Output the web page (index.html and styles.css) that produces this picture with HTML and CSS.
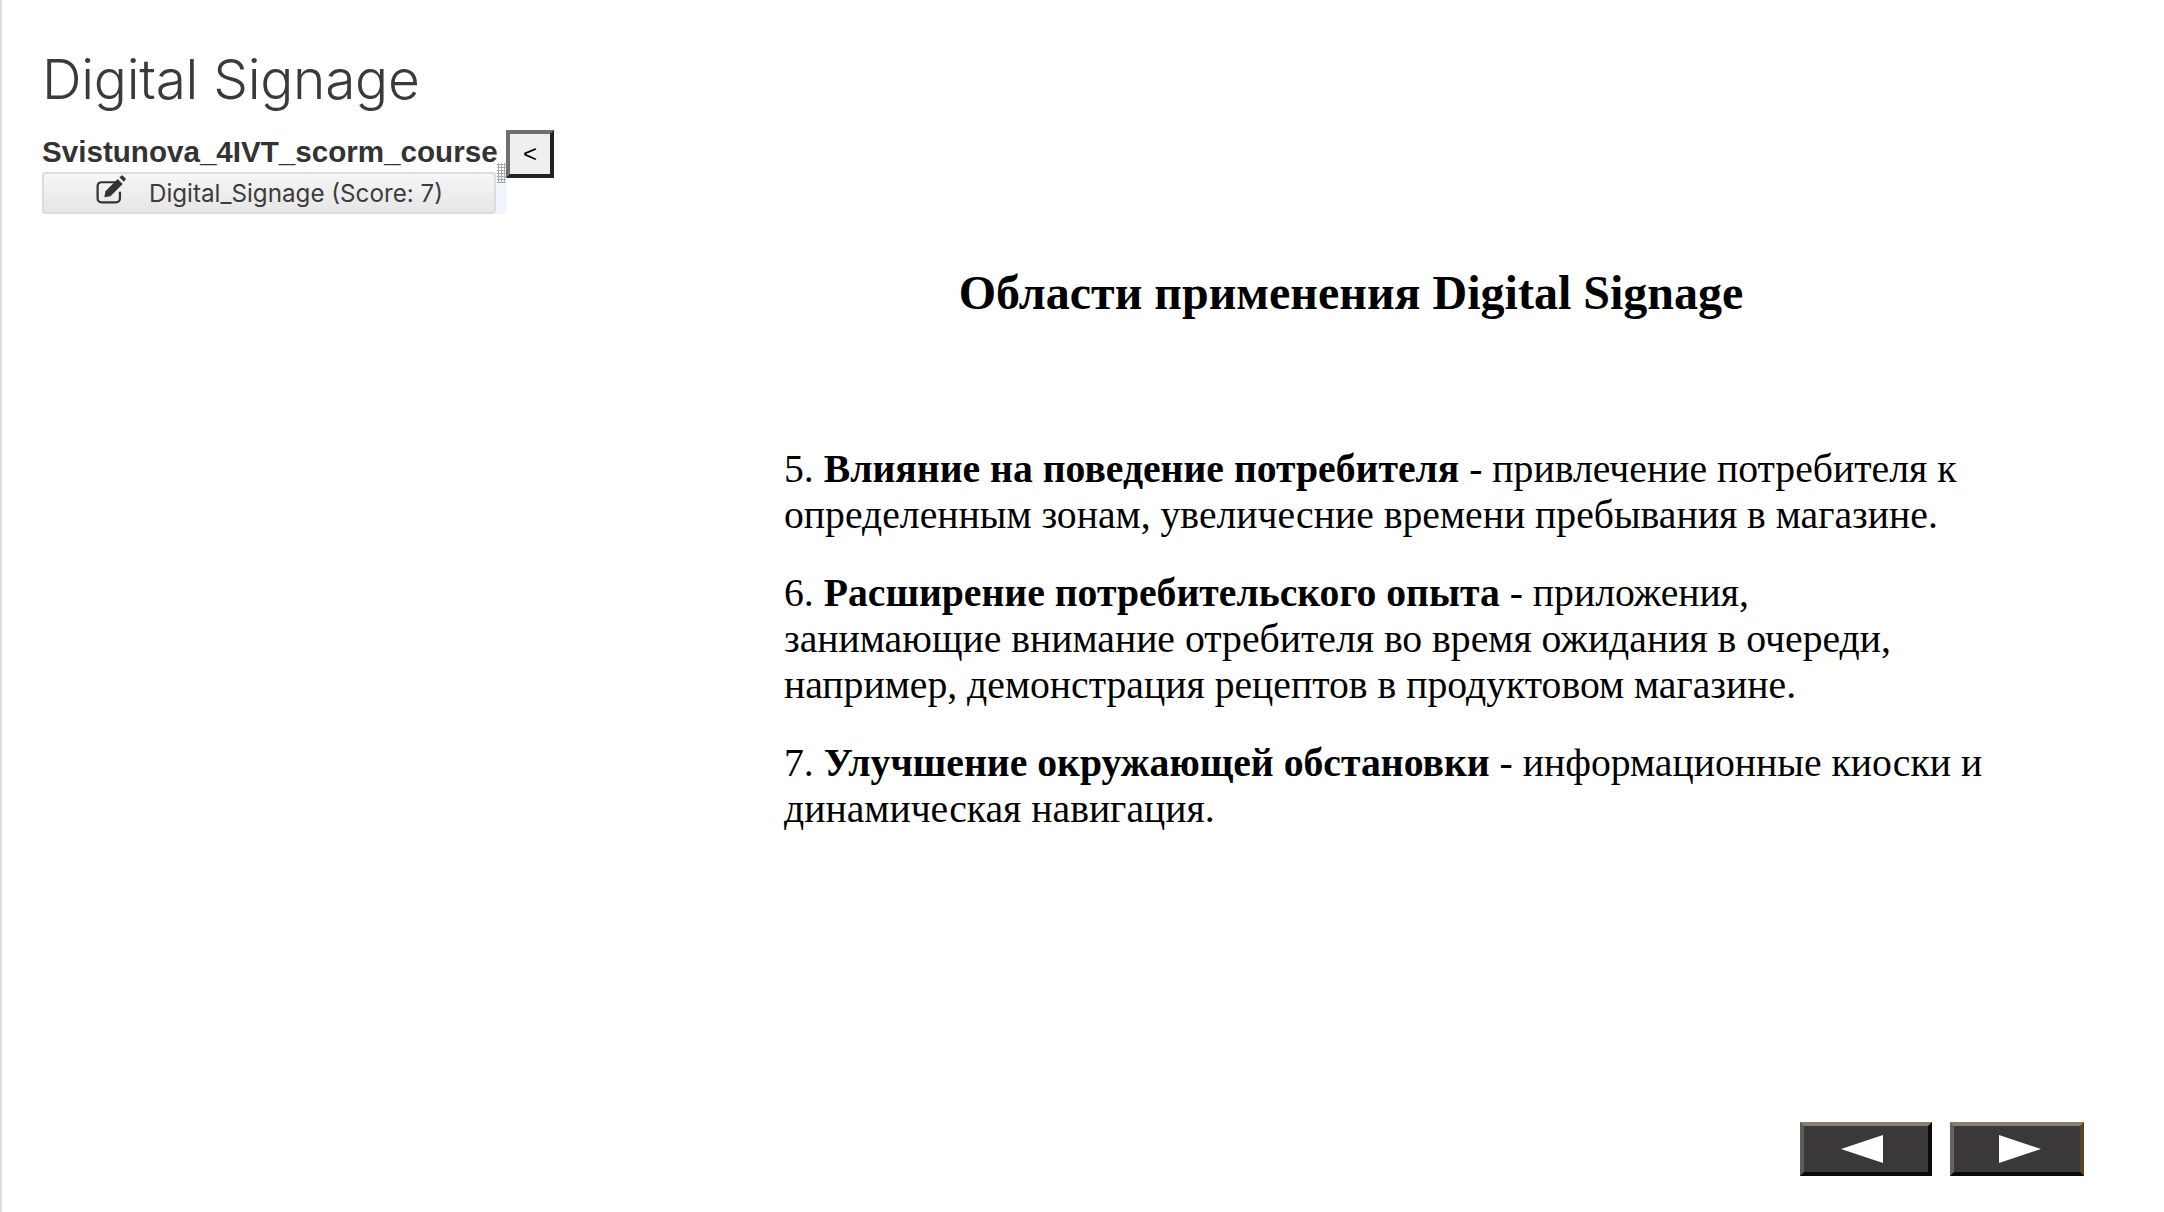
FILE: index.html
```html
<!DOCTYPE html>
<html lang="ru">
<head>
    <meta charset="UTF-8">
    <meta name="viewport" content="width=device-width, initial-scale=1.0">
    <title>Digital Signage</title>
    <link rel="stylesheet" href="styles.css">
</head>
<body>
    <div class="page">
        <h1 class="course-title">Digital Signage</h1>
        <div class="columns">
            <!-- Menu -->
            <div class="sidebar">
                <div class="tree">
                    <div class="tree-name">Svistunova_4IVT_scorm_course</div>
                    <div class="tree-row">
                        <a class="tree-item">
                            <svg class="edit-icon" viewBox="0 0 28 26" width="32" height="29" fill="none">
                                <path d="M19 6.500H5.500C3.500 6.500 2 8 2 10v11c0 2 1.500 3.500 3.500 3.500h13c2 0 3.500-1.500 3.500-3.500v-6" stroke="#333" stroke-width="2"/>
                                <path d="M9 14.500 20 3.500l4.500 4.500-11 11-5.500 1z" fill="#333"/>
                                <path d="M21.500 2 23 .8c.6-.5 1.300-.5 1.800 0l2 2c.5.5.5 1.200 0 1.700L25.500 6z" fill="#333"/>
                            </svg>
                            <span>Digital_Signage (Score: 7)</span>
                        </a>
                        <div class="tree-grip"></div>
                    </div>
                </div>
                <button class="toggle">&lt;</button>
            </div>

            <!-- Slide -->
            <div class="slide">
                <h2 class="slide-title">Области применения Digital Signage</h2>
                <p>5. <b>Влияние на поведение потребителя</b> - привлечение потребителя к определенным зонам, увеличесние времени пребывания в магазине.</p>
                <p>6. <b>Расширение потребительского опыта</b> - приложения,<br>занимающие внимание отребителя во время ожидания в очереди, например, демонстрация рецептов в продуктовом магазине.</p>
                <p>7. <b>Улучшение окружающей обстановки</b> - информационные киоски и динамическая навигация.</p>
            </div>
        </div>

        <!-- Navigatie -->
        <div class="nav">
            <button class="nav-btn nav-prev"><svg viewBox="0 0 44 30" width="44" height="30"><path d="M1 15 43 1v28z" fill="#fff"/></svg></button>
            <button class="nav-btn nav-next"><svg viewBox="0 0 44 30" width="44" height="30"><path d="M43 15 1 1v28z" fill="#fff"/></svg></button>
        </div>
    </div>
</body>
</html>
```

FILE: styles.css
```css
html, body {
    margin: 0;
    padding: 0;
    background-color: #fff;
}
.page {
    height: 1212px;
    box-sizing: border-box;
    border-left: 2px solid #ddd;
    padding: 46px 0 0 40px;
    display: flex;
    flex-direction: column;
    overflow: hidden;
}
.course-title {
    margin: 0;
    font-family: Inter, sans-serif;
    font-weight: 300;
    font-size: 55px;
    line-height: 66px;
    letter-spacing: -0.300px;
    color: #3a3a3a;
}
.columns {
    display: flex;
    flex: 1;
    margin-top: 18px;
}
.sidebar {
    display: flex;
    align-items: flex-start;
    width: 742px;
    flex-shrink: 0;
}
.tree {
    width: 464px;
}
.tree-name {
    font-family: "Liberation Sans", Arial, sans-serif;
    font-weight: bold;
    font-size: 29.600px;
    line-height: 30px;
    height: 42px;
    padding-top: 7px;
    box-sizing: border-box;
    color: #333;
}
.tree-row {
    display: flex;
    height: 42px;
    background-color: #f0f5fd;
    position: relative;
}
.tree-item {
    width: 454px;
    box-sizing: border-box;
    display: flex;
    align-items: center;
    justify-content: center;
    gap: 22px;
    padding-top: 1px;
    border: 2px solid #dcdcdc;
    border-radius: 4px;
    background: linear-gradient(#f6f6f6, #e6e6e6);
    font-family: Inter, sans-serif;
    font-size: 24.200px;
    color: #3c3c3c;
}
.edit-icon {
    margin-top: -8px;
}
.tree-grip {
    position: absolute;
    right: 0;
    top: -9px;
    width: 9px;
    height: 20px;
    background-image: radial-gradient(#aaa 1.2px, transparent 1.4px);
    background-size: 3px 3px;
}
.toggle {
    width: 48px;
    height: 48px;
    box-sizing: border-box;
    padding: 0;
    border: 4px solid;
    border-color: #6f6f6f #222 #222 #6f6f6f;
    background-color: #efefef;
    font-family: "Liberation Sans", Arial, sans-serif;
    font-size: 24px;
    color: #000;
}
.slide {
    width: 1210px;
    font-family: "Liberation Serif", "Times New Roman", serif;
    font-size: 39.700px;
    line-height: 46px;
    color: #000;
}
.slide-title {
    margin: 135px 76px 125px 0;
    text-align: center;
    font-size: 48px;
    line-height: 56px;
}
.slide p {
    margin: 0 0 32px;
}
.nav {
    display: flex;
    justify-content: flex-end;
    gap: 18px;
    padding: 0 80px 36px 0;
}
.nav-btn {
    height: 54px;
    box-sizing: border-box;
    padding: 0;
    display: flex;
    align-items: center;
    justify-content: center;
    border: 4px solid;
    background-color: #3a3839;
}
.nav-prev {
    width: 132px;
    padding-right: 8px;
    border-color: #8d7f6c #0a0a0a #0a0a0a #5c5c5c;
}
.nav-next {
    width: 134px;
    padding-left: 6px;
    border-color: #8d7f6c #5a4526 #0a0a0a #6a6358;
}
```
